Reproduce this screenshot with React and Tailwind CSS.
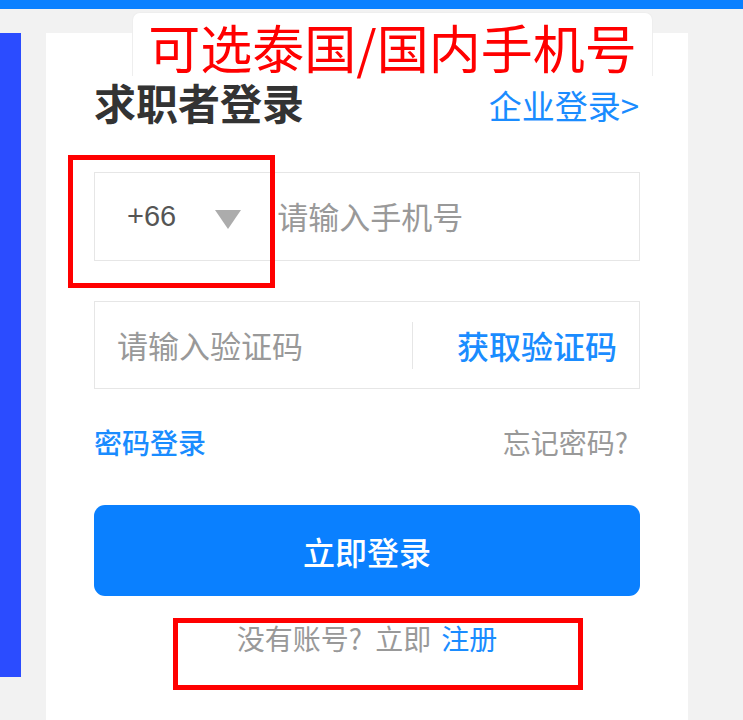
import React from "react";

const font = { fontFamily: '"Noto Sans CJK SC", "Liberation Sans", sans-serif' };

const App = () => {
  return (
    <div
      className="relative w-[743px] h-[720px] overflow-hidden bg-[#f2f2f2]"
      style={font}
    >
      <div className="h-[9px] bg-[#0a80ff]" />

      <div className="flex items-start pt-[24px]">
        <div className="w-[21px] h-[644px] bg-[#2b4cff]" />

        <div className="ml-[25px] w-[642px] h-[700px] bg-white px-[48px] pt-[48px]">
          <div className="flex items-center justify-between h-[42px]">
            <h1 className="text-[42px] leading-none font-bold text-[#333]">
              求职者登录
            </h1>
            <a className="text-[33px] leading-none text-[#1a8cff] mr-[1px] mt-[6px]">
              企业登录&gt;
            </a>
          </div>

          <div className="mt-[49px] h-[89px] border border-[#e6e6e6] flex items-center">
            <span className="ml-[32px] text-[29px] text-[#555]" style={{ fontFamily: '"Liberation Sans", sans-serif' }}>
              +66
            </span>
            <svg className="ml-[39px] mt-[5px]" width="26" height="19" viewBox="0 0 26 19">
              <polygon points="0,0 26,0 13,19" fill="#acacac" />
            </svg>
            <span className="ml-[36px] text-[31px] text-[#999]">请输入手机号</span>
          </div>

          <div className="mt-[40px] h-[88px] border border-[#e6e6e6] flex items-center">
            <span className="ml-[22px] text-[31px] text-[#999] flex-1">请输入验证码</span>
            <div className="w-px h-[47px] bg-[#e6e6e6]" />
            <span className="ml-[44px] mr-[22px] text-[32px] font-medium text-[#1a8cff]">获取验证码</span>
          </div>

          <div className="mt-[39px] flex items-center justify-between h-[28px]">
            <a className="text-[28px] leading-none font-medium text-[#1a8cff]">密码登录</a>
            <a className="text-[28px] leading-none text-[#999] mr-[12px]">忘记密码?</a>
          </div>

          <button className="mt-[49px] w-full h-[91px] rounded-[11px] bg-[#0a80ff] text-white text-[32px] font-medium">
            立即登录
          </button>

          <p className="mt-[28px] text-center text-[28px] leading-none text-[#999]">
            没有账号?<span className="ml-[13px]">立即</span>
            <span className="ml-[10px] text-[#1a8cff]">注册</span>
          </p>
        </div>
      </div>

      {/* annotations */}
      <div className="absolute left-[132px] top-[12px] w-[521px] h-[64px] bg-white rounded-t-[8px] border-t border-x border-[#eeeeee] flex items-end justify-center pb-[3px]">
        <span className="text-[52px] leading-none text-[#ff0000]">
          可选泰国/国内手机号
        </span>
      </div>
      <div className="absolute left-[68px] top-[155px] w-[207px] h-[133px] border-[5px] border-[#ff0000]" />
      <div className="absolute left-[173px] top-[618px] w-[410px] h-[72px] border-[5px] border-[#ff0000]" />
    </div>
  );
};

export default App;
